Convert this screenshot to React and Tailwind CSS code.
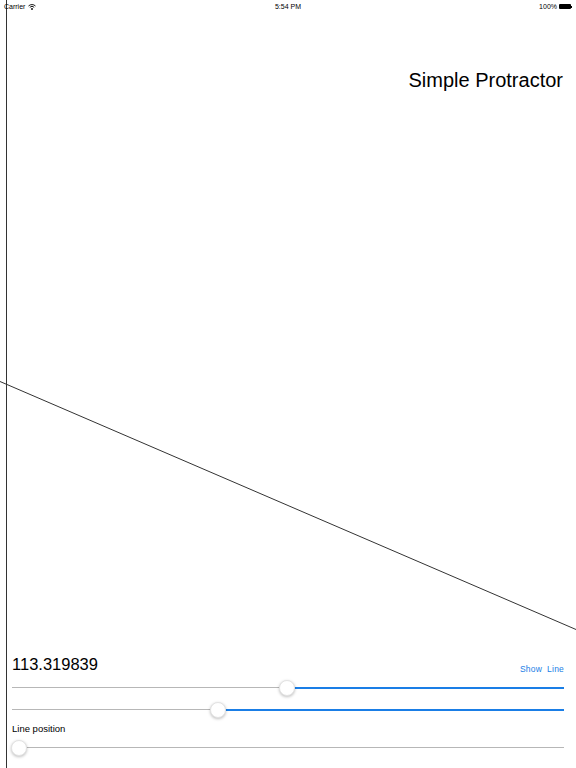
import React from 'react';

const font = { fontFamily: '"Liberation Sans", Arial, sans-serif' };

const Slider = ({ value, filled }) => (
  <div className="relative h-[18px]">
    <div className="absolute left-0 right-0 top-[8px] flex h-[1px]">
      <div className="h-[1px] bg-[#b7b7b7]" style={{ width: `${value}%` }} />
      <div className={`h-[1px] flex-1 ${filled ? 'bg-[#1a7ee6] h-[2px] -mt-[0.5px]' : 'bg-[#b7b7b7]'}`} />
    </div>
    <div
      className="absolute top-[1px] h-[16px] w-[16px] -ml-[8px] rounded-full bg-white border border-[#e3e3e3] shadow-[0_1px_3px_rgba(0,0,0,0.25)]"
      style={{ left: `${value}%` }}
    />
  </div>
);

const App = () => {
  return (
    <div className="relative w-[576px] h-[768px] bg-white overflow-hidden flex flex-col text-black" style={font}>
      <svg className="absolute inset-0 pointer-events-none" width="576" height="768">
        <line x1="6.5" y1="0" x2="6.5" y2="768" stroke="#333" strokeWidth="1" />
        <line x1="0" y1="381.5" x2="576" y2="629.5" stroke="#333" strokeWidth="1" />
      </svg>

      <div className="relative flex items-center justify-between h-[13px] px-[4px] text-[7px] leading-none">
        <div className="flex items-center gap-[3px]">
          <span>Carrier</span>
          <svg width="8" height="6" viewBox="0 0 8 6">
            <path d="M0.5 2 A5 5 0 0 1 7.5 2" fill="none" stroke="#000" strokeWidth="0.9" />
            <path d="M1.8 3.3 A3.2 3.2 0 0 1 6.2 3.3" fill="none" stroke="#000" strokeWidth="0.9" />
            <circle cx="4" cy="5" r="0.9" fill="#000" />
          </svg>
        </div>
        <span className="absolute left-1/2 -translate-x-1/2 font-medium">5:54 PM</span>
        <div className="flex items-center gap-[2px]">
          <span>100%</span>
          <div className="flex items-center">
            <div className="w-[12px] h-[5px] bg-black rounded-[1px]" />
            <div className="w-[1px] h-[2px] bg-black" />
          </div>
        </div>
      </div>

      <div className="relative flex justify-end pr-[13px] mt-[55px]">
        <span className="text-[20px] leading-[24px]">Simple Protractor</span>
      </div>

      <div className="flex-1" />

      <div className="relative px-[12px] pb-[11px]">
        <div className="flex items-end justify-between">
          <span className="text-[16.5px] leading-[20px]">113.319839</span>
          <span className="text-[8.5px] leading-[11px] text-[#1a7ee6] -mb-[1px] tracking-[0.2px]">Show&nbsp; Line</span>
        </div>
        <div className="mt-[5px]">
          <Slider value={49.9} filled />
        </div>
        <div className="mt-[4px]">
          <Slider value={37.3} filled />
        </div>
        <div className="mt-[4px] text-[9.5px] leading-[11px]">Line position</div>
        <div className="mt-[5px]">
          <Slider value={1.3} />
        </div>
      </div>
    </div>
  );
};

export default App;
